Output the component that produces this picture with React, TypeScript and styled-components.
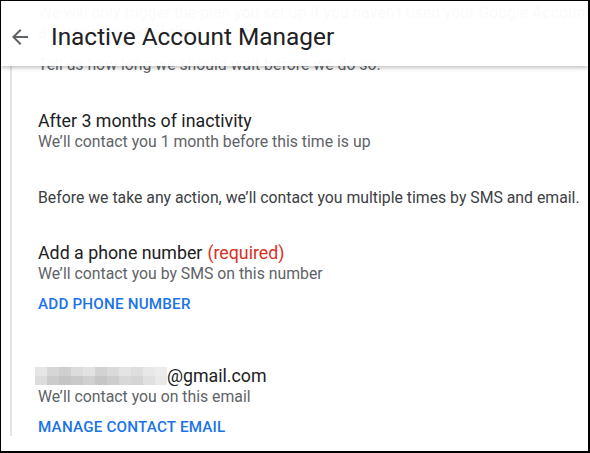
import React from "react";
import styled, { createGlobalStyle } from "styled-components";

const Global = createGlobalStyle`
  html, body { margin: 0; padding: 0; background: #fff; }
  body { font-family: Roboto, "Noto Sans", Arial, sans-serif; }
  * { box-sizing: border-box; }
`;

const Frame = styled.div`
  position: relative;
  width: 590px;
  height: 453px;
  overflow: hidden;
  background: #fff;
  border-style: solid;
  border-color: #000;
  border-width: 1px 2px 2px 1px;
`;

const Header = styled.header`
  position: absolute;
  top: 0;
  left: 0;
  right: 0;
  height: 65px;
  display: flex;
  align-items: center;
  gap: 19px;
  padding: 6px 0 0 7px;
  background: rgba(255, 255, 255, 0.965);
  box-shadow: 0 2px 4px rgba(0, 0, 0, 0.24);
  z-index: 2;
`;

const BackButton = styled.button`
  display: flex;
  align-items: center;
  justify-content: center;
  width: 24px;
  height: 24px;
  padding: 0;
  border: none;
  background: none;
  color: #5f6368;
`;

const Title = styled.h1`
  margin: 0;
  font-family: Roboto, Arial, sans-serif;
  font-size: 24.4px;
  font-weight: 400;
  color: #202124;
`;

const Card = styled.main`
  margin-left: 9px;
  border-left: 2px solid #e3e3e3;
  padding: 2px 0 0 26px;
  display: flex;
  flex-direction: column;
`;

const Intro = styled.p<{ $gap?: number }>`
  margin: 0 0 ${(p) => p.$gap ?? 0}px;
  font-size: 15.8px;
  line-height: 20px;
  color: #5f6368;
  white-space: nowrap;
`;

const Section = styled.section<{ $top: number }>`
  display: flex;
  flex-direction: column;
  margin-top: ${(p) => p.$top}px;
`;

const Heading = styled.div`
  font-size: 17.8px;
  line-height: 22px;
  color: #202124;
  display: flex;
  align-items: center;
`;

const Required = styled.span`
  color: #d93025;
  margin-left: 5px;
`;

const Sub = styled.div`
  font-size: 15.8px;
  line-height: 20px;
  color: #5f6368;
`;

const Note = styled.p`
  margin: 0;
  font-size: 15.8px;
  line-height: 20px;
  color: #3c4043;
  white-space: nowrap;
`;

const Action = styled.a`
  margin-top: 11px;
  font-size: 15.2px;
  line-height: 18px;
  font-weight: 500;
  letter-spacing: 0.2px;
  color: #1a73e8;
  text-transform: uppercase;
  text-decoration: none;
`;

const RedactedBox = styled.svg`
  margin-left: -3px;
  flex-shrink: 0;
`;

const ArrowIcon = () => (
  <svg width="24" height="24" viewBox="0 0 24 24" fill="currentColor">
    <path d="M20 11H7.83l5.59-5.59L12 4l-8 8 8 8 1.41-1.41L7.83 13H20v-2z" />
  </svg>
);

const mosaic = [
  ["#e6e6e6", "#d6d6d6", "#cfcfcf", "#dcdcdc", "#e2e2e2", "#d2d2d2", "#dadada", "#e4e4e4", "#dedede", "#e8e8e8", "#ececec"],
  ["#dcdcdc", "#cbcbcb", "#c4c4c4", "#c9c9c9", "#d0d0d0", "#c6c6c6", "#cdcdcd", "#d8d8d8", "#d4d4d4", "#e0e0e0", "#e9e9e9"],
];

const Redacted = () => (
  <RedactedBox width="132" height="18" viewBox="0 0 132 18">
    {mosaic.map((row, r) =>
      row.map((c, i) => (
        <rect key={`${r}-${i}`} x={i * 12} y={r * 9} width="12" height="9" fill={c} />
      ))
    )}
  </RedactedBox>
);

export default function App() {
  return (
    <>
      <Global />
      <Frame>
        <Header>
          <BackButton aria-label="Back">
            <ArrowIcon />
          </BackButton>
          <Title>Inactive Account Manager</Title>
        </Header>
        <Card>
          <Intro $gap={12}>
            We will only trigger the plan you set up if you haven’t used your Google Account for
            <br />a certain period of time.
          </Intro>
          <Intro>Tell us how long we should wait before we do so.</Intro>

          <Section $top={35}>
            <Heading>After 3 months of inactivity</Heading>
            <Sub>We’ll contact you 1 month before this time is up</Sub>
          </Section>

          <Section $top={36}>
            <Note>Before we take any action, we’ll contact you multiple times by SMS and email.</Note>
          </Section>

          <Section $top={34}>
            <Heading>
              Add a phone number<Required>(required)</Required>
            </Heading>
            <Sub>We’ll contact you by SMS on this number</Sub>
            <Action href="#">Add phone number</Action>
          </Section>

          <Section $top={52}>
            <Heading>
              <Redacted />
              @gmail.com
            </Heading>
            <Sub>We’ll contact you on this email</Sub>
            <Action href="#">Manage contact email</Action>
          </Section>
        </Card>
      </Frame>
    </>
  );
}
